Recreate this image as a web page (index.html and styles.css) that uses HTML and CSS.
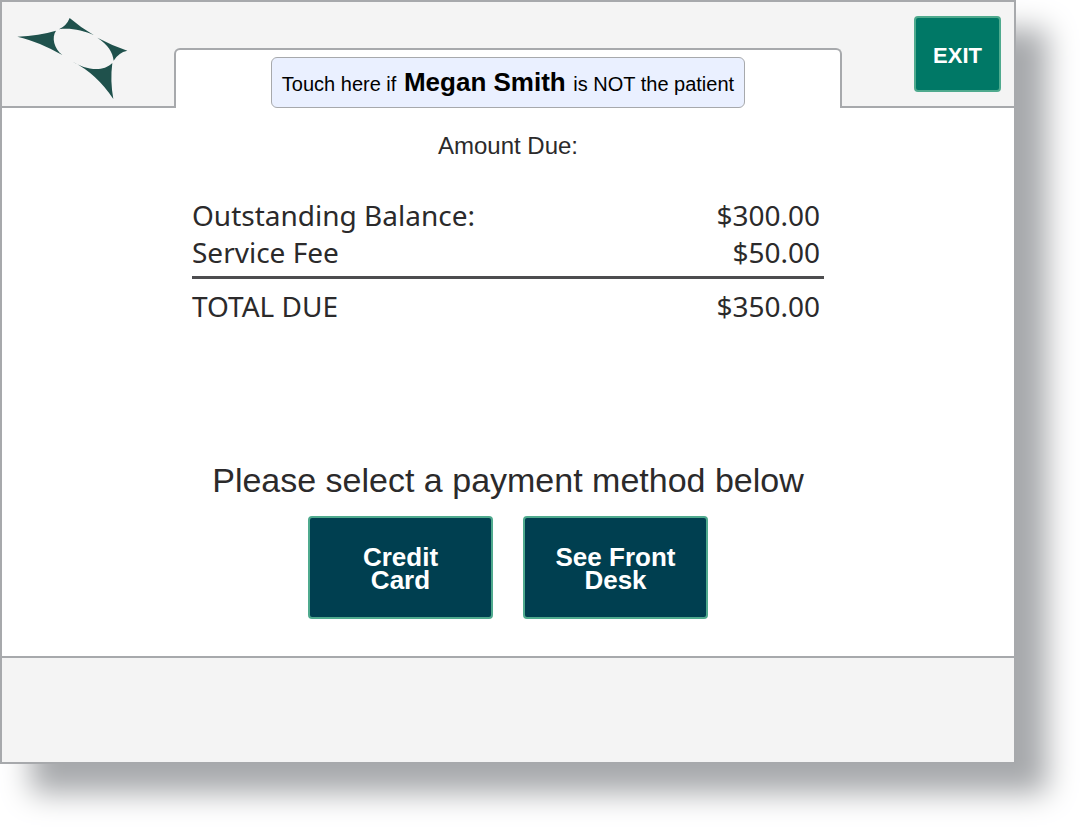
FILE: index.html
```html
<!DOCTYPE html>
<html lang="en">
<head>
  <meta charset="UTF-8">
  <meta name="viewport" content="width=device-width, initial-scale=1.0">
  <title>Amount Due</title>
  <link rel="stylesheet" href="styles.css">
</head>
<body>

  <div class="kiosk">
    <header class="header">
      <div class="header-side">
        <svg class="logo" viewBox="51 53 333 244" role="img" aria-label="Logo">
          <path d="M52 109 Q118 106 168 91 C154 112 162 144 187 164 C140 138 100 120 52 109Z"/>
          <path d="M209 53 Q245 84 282 105 C250 90 210 82 177 87 Q200 76 209 53Z"/>
          <path d="M292 112 Q335 135 382 151 Q355 157 341 181 C338 155 325 135 292 112Z"/>
          <path d="M218 184 C250 204 305 220 337 188 Q330 240 340 296 Q290 220 218 184Z"/>
        </svg>
      </div>
      <div class="tab">
        <button type="button" class="patient-button">Touch here if <strong>Megan Smith</strong> is NOT the patient</button>
      </div>
      <div class="header-side header-right">
        <button type="button" class="exit-button">EXIT</button>
      </div>
    </header>

    <main class="main">
      <h1>Amount Due:</h1>

      <table class="charges">
        <tbody>
          <tr>
            <th scope="row">Outstanding Balance:</th>
            <td>$300.00</td>
          </tr>
          <tr>
            <th scope="row">Service Fee</th>
            <td>$50.00</td>
          </tr>
        </tbody>
        <tfoot>
          <tr>
            <th scope="row">TOTAL DUE</th>
            <td>$350.00</td>
          </tr>
        </tfoot>
      </table>

      <section class="payment">
        <h2>Please select a payment method below</h2>
        <div class="payment-buttons">
          <button type="button" class="pay-button">Credit<br>Card</button>
          <button type="button" class="pay-button">See Front<br>Desk</button>
        </div>
      </section>
    </main>

    <footer class="footer"></footer>
  </div>

</body>
</html>
```
FILE: styles.css
```css
* {
  box-sizing: border-box;
}

body {
  margin: 0;
  padding: 0 64px 64px 0;
  background: #fff;
  color: #2b2a2b;
  font-family: "Liberation Sans", Arial, sans-serif;
}

button {
  font-family: inherit;
  cursor: pointer;
}

.kiosk {
  display: flex;
  flex-direction: column;
  min-height: calc(100vh - 64px);
  background: #fff;
  border: 2px solid #a7a9ac;
  box-shadow: 31px 29px 28px #a7a9ac;
}

/* Header: the white tab opens into the main area */
.header {
  display: flex;
  align-items: stretch;
  min-height: 106px;
  background: #f4f4f4;
}

.header-side {
  flex: 0 0 172px;
  padding: 16px 15px 0;
  border-bottom: 2px solid #a7a9ac;
}

.header-right {
  padding: 14px 13px 0;
  text-align: right;
}

.logo {
  display: block;
  width: 111px;
  fill: #1f514c;
}

.tab {
  flex: 1;
  display: flex;
  justify-content: center;
  margin-top: 46px;
  padding-top: 7px;
  background: #fff;
  border: 2px solid #a7a9ac;
  border-bottom: none;
  border-radius: 6px 6px 0 0;
}

.patient-button {
  padding: 0 10px;
  background: #eaf0ff;
  border: 1px solid #a7a9ac;
  border-radius: 6px;
  color: #000;
  font-size: 20px;
}

.patient-button strong {
  margin: 0 2px;
  font-size: 26px;
}

.exit-button {
  width: 87px;
  height: 76px;
  padding: 3px 0 0;
  background: #007866;
  border: 2px solid #4faa8e;
  border-radius: 4px;
  color: #fff;
  font-size: 22px;
  font-weight: bold;
}

/* Main */
.main {
  flex: 1;
  display: flex;
  flex-direction: column;
  align-items: center;
  padding: 24px 24px 37px;
}

h1,
h2 {
  margin: 0;
  font-weight: normal;
  text-align: center;
}

h1 {
  font-size: 24px;
  line-height: 28px;
}

.charges {
  width: 100%;
  max-width: 632px;
  margin-top: 37px;
  border-collapse: collapse;
  font-family: "Noto Sans", sans-serif;
  font-size: 28px;
  line-height: 37px;
}

.charges th,
.charges td {
  padding: 0;
  font-weight: normal;
  text-align: left;
}

.charges td {
  padding-right: 4px;
  text-align: right;
}

.charges tfoot th,
.charges tfoot td {
  padding-top: 9px;
}

.charges tbody tr:last-child th,
.charges tbody tr:last-child td {
  padding-bottom: 5px;
  border-bottom: 3px solid #4d4d4f;
}

.payment {
  margin-top: auto;
}

h2 {
  font-size: 34px;
  line-height: 40px;
}

.payment-buttons {
  display: flex;
  justify-content: center;
  gap: 30px;
  margin-top: 16px;
}

.pay-button {
  width: 185px;
  height: 103px;
  padding: 3px 0 0;
  background: #003f50;
  border: 2px solid #4faa8e;
  border-radius: 4px;
  color: #fff;
  font-size: 26px;
  font-weight: bold;
  line-height: 23px;
}

.footer {
  height: 106px;
  background: #f4f4f4;
  border-top: 2px solid #a7a9ac;
}
```
